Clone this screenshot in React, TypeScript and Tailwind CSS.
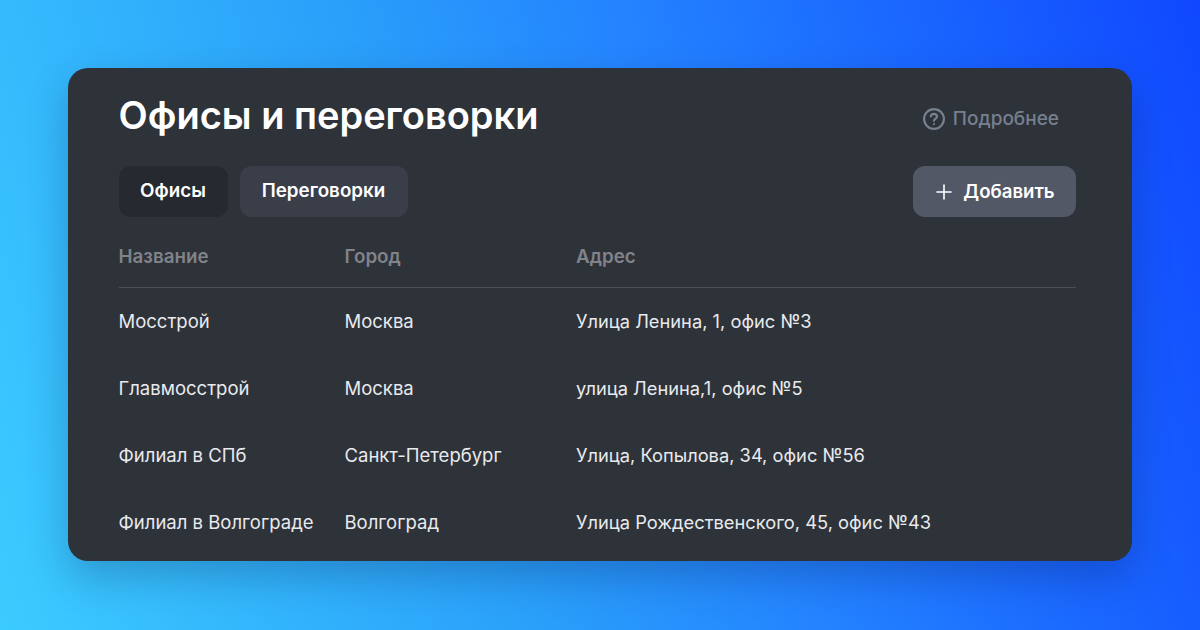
import { Plus } from "lucide-react";

const rows = [
  { name: "Мосстрой", city: "Москва", address: "Улица Ленина, 1, офис №3" },
  { name: "Главмосстрой", city: "Москва", address: "улица Ленина,1, офис №5" },
  { name: "Филиал в СПб", city: "Санкт-Петербург", address: "Улица, Копылова, 34, офис №56" },
  { name: "Филиал в Волгограде", city: "Волгоград", address: "Улица Рождественского, 45, офис №43" },
];

function HelpIcon() {
  return (
    <svg width="24" height="24" viewBox="0 0 24 24" fill="none" stroke="#76808f" strokeWidth="2.2" strokeLinecap="round">
      <circle cx="12" cy="12" r="9.9" />
      <path d="M8.8 9.4a3.2 3.2 0 0 1 6.3 .1c0 2.1 -3.1 2.2 -3.1 4.3" />
      <circle cx="12" cy="17" r="0.5" fill="#76808f" strokeWidth="1.2" />
    </svg>
  );
}

export default function App() {
  return (
    <div className="w-[1200px] h-[630px] overflow-hidden pt-[68px] pl-[68px] bg-[linear-gradient(72deg,#3ccbff_0%,#2aa0fa_38%,#2484ff_58%,#1048ff_100%)] font-['Inter',sans-serif]">
      <div className="w-[1064px] h-[493px] overflow-hidden bg-[#2e3239] rounded-[20px] pl-[50.5px] pr-[56px] shadow-[0_16px_40px_rgba(0,0,40,0.22)]">
        <div className="flex items-center justify-between h-[98px] pr-[17px]">
          <h1 className="text-[38px] leading-[44px] font-semibold text-white -mt-[4px]">Офисы и переговорки</h1>
          <a className="flex items-center gap-[7px] text-[19px] font-medium text-[#76808f] mt-[4px]">
            <HelpIcon />
            Подробнее
          </a>
        </div>

        <div className="flex items-center justify-between">
          <div className="flex gap-[12px]">
            <button className="h-[51px] w-[109px] rounded-[12px] bg-[#262a30] text-white text-[18.8px] font-semibold">Офисы</button>
            <button className="h-[51px] w-[168px] rounded-[12px] bg-[#3a3e48] text-white text-[18.8px] font-semibold">Переговорки</button>
          </div>
          <button className="flex items-center justify-center gap-[7px] pr-[2px] h-[51px] w-[163px] rounded-[12px] bg-[#525866] text-white text-[18.6px] font-semibold">
            <Plus size={24} strokeWidth={1.6} />
            Добавить
          </button>
        </div>

        <div className="mt-[16px]">
          <div className="flex h-[55px] pb-[6px] items-center border-b border-[#4a4e56] text-[18.8px] font-semibold text-[#80838a]">
            <div className="w-[226px]">Название</div>
            <div className="w-[231.5px]">Город</div>
            <div>Адрес</div>
          </div>
          {rows.map((row) => (
            <div key={row.name} className="flex h-[67.2px] items-center text-[18.5px] text-[#e8eaee]">
              <div className="w-[226px]">{row.name}</div>
              <div className="w-[231.5px]">{row.city}</div>
              <div className="text-[18.3px]">{row.address}</div>
            </div>
          ))}
        </div>
      </div>
    </div>
  );
}
